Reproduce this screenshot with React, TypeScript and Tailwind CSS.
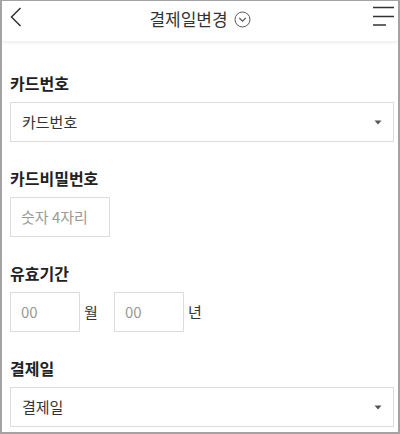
import React from "react";

function Caret() {
  return (
    <svg width="8" height="5" viewBox="0 0 8 5" className="shrink-0">
      <path d="M0.5 0.5 L7.5 0.5 L4 4.5 Z" fill="#555" />
    </svg>
  );
}

function Label({ children, first }: { children: React.ReactNode; first?: boolean }) {
  return (
    <div className={`${first ? "" : "mt-[24px]"} mb-[7px] h-6 text-[16px] font-bold leading-6 text-[#222]`}>
      {children}
    </div>
  );
}

function SelectBox({ value }: { value: string }) {
  return (
    <div className="flex h-10 items-center justify-between border border-[#dcdcdc] bg-white pl-[11px] pr-[11px]">
      <span className="text-[15px] text-[#333]">{value}</span>
      <Caret />
    </div>
  );
}

function InputBox({ placeholder, width }: { placeholder: string; width: string }) {
  return (
    <div className={`flex h-10 items-center border border-[#dcdcdc] bg-white pl-[10px] ${width}`}>
      <span className="text-[15px] text-[#9a9a9a]">{placeholder}</span>
    </div>
  );
}

export default function App() {
  return (
    <div
      className="h-[434px] w-[400px] overflow-hidden border-2 border-t border-[#a3a3a3] bg-white"
      style={{ fontFamily: '"Noto Sans CJK KR", "Noto Sans", sans-serif' }}
    >
      <header className="relative flex h-[40px] items-center justify-center bg-white shadow-[0_2px_3px_rgba(0,0,0,0.07)]">
        <svg width="12" height="20" viewBox="0 0 12 20" className="absolute left-[8px] top-[6px]">
          <path d="M10.5 1 L1.5 10 L10.5 19" fill="none" stroke="#333" strokeWidth="1.5" />
        </svg>
        <div className="flex items-center gap-[6px] pb-[4px]">
          <span className="text-[17px] text-[#333]">결제일변경</span>
          <svg width="17" height="17" viewBox="0 0 17 17">
            <circle cx="8.5" cy="8.5" r="7.5" fill="none" stroke="#555" strokeWidth="1" />
            <path d="M5.3 7 L8.5 10.2 L11.7 7" fill="none" stroke="#555" strokeWidth="1.1" />
          </svg>
        </div>
        <svg width="21" height="20" viewBox="0 0 21 20" className="absolute right-[4px] top-[5px]">
          <path d="M0 1.5 H21 M0 10.5 H21 M0 19 H13" stroke="#333" strokeWidth="1.5" />
        </svg>
      </header>

      <main className="pl-[8px] pr-[4px] pt-[30px]">
        <Label first>카드번호</Label>
        <SelectBox value="카드번호" />

        <Label>카드비밀번호</Label>
        <InputBox placeholder="숫자 4자리" width="w-[100px]" />

        <Label>유효기간</Label>
        <div className="flex items-center">
          <InputBox placeholder="00" width="w-[70px]" />
          <span className="ml-[4px] w-[30px] text-[15px] text-[#333]">월</span>
          <InputBox placeholder="00" width="w-[70px]" />
          <span className="ml-[4px] text-[15px] text-[#333]">년</span>
        </div>

        <Label>결제일</Label>
        <SelectBox value="결제일" />
      </main>
    </div>
  );
}
